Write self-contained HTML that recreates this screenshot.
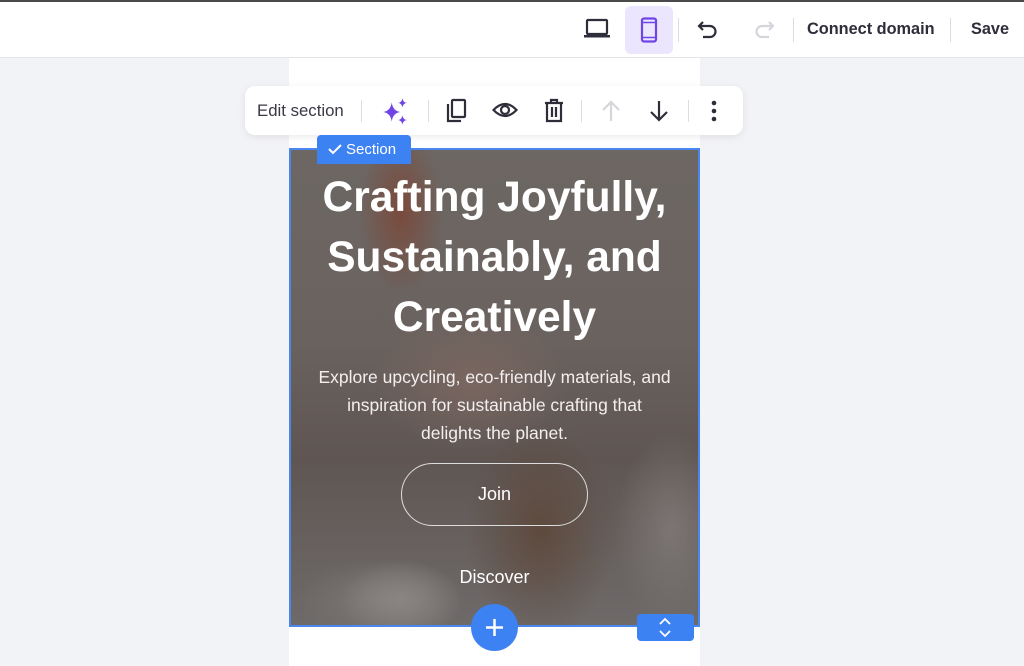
<!DOCTYPE html>
<html><head><meta charset="utf-8"><style>
*{margin:0;padding:0;box-sizing:border-box}
body{width:1024px;height:666px;overflow:hidden;background:#f2f3f6;font-family:"Liberation Sans",sans-serif;position:relative}
.top{position:absolute;left:0;top:0;width:1024px;height:58px;background:#fff;border-top:2px solid #4a4a4a;border-bottom:1px solid #e3e4e8}
.col{position:absolute;left:289px;top:58px;width:411px;height:608px;background:#fff}
.sec{position:absolute;left:289px;top:148px;width:411px;height:479px;border:2px solid #4a86f0;overflow:hidden;
background:
radial-gradient(ellipse 60px 40px at 110px 450px,#8a8583,transparent),
radial-gradient(ellipse 120px 60px at 90px 450px,#7d7876,transparent 70%),
radial-gradient(ellipse 80px 140px at 380px 380px,#7b7573,transparent 70%),
radial-gradient(ellipse 100px 150px at 250px 380px,#5e4a3e,transparent 75%),
radial-gradient(ellipse 140px 100px at 180px 230px,#7a6660,transparent 70%),
radial-gradient(ellipse 60px 120px at 110px 60px,#7a4a3c,transparent 70%),
linear-gradient(180deg,#6d6764 0%,#6a625e 40%,#5f5653 65%,#6e6a69 100%)}
h1{position:absolute;top:18px;left:0;width:407px;text-align:center;color:#fff;font-size:42.5px;line-height:60px;font-weight:bold}
p{position:absolute;top:213px;left:25px;width:357px;text-align:center;color:#f2efee;font-size:17.5px;line-height:28px}
.join{position:absolute;left:110px;top:313px;width:187px;height:63px;border:1.5px solid #ddd;border-radius:32px;color:#fff;font-size:18px;text-align:center;line-height:60px}
.disc{position:absolute;left:0;width:407px;top:417px;text-align:center;color:#fff;font-size:18px}
.tb{position:absolute;left:245px;top:86px;width:498px;height:49px;background:#fff;border-radius:10px;box-shadow:0 2px 8px rgba(0,0,0,.08)}
.sep{position:absolute;width:1px;height:22px;background:#dcdde2;top:14px}
.lbl{position:absolute;left:317px;top:135px;width:94px;height:29px;background:#3d82f3;border-radius:4px 4px 0 0;color:#fff;font-size:15px;line-height:29px;padding-left:29px}
svg{position:absolute}
</style></head><body>
<div class="top">
 <div style="position:absolute;left:625px;top:4px;width:48px;height:48px;background:#ebe6fd;border-radius:6px"></div>
 <svg style="left:583px;top:16px" width="28" height="22" viewBox="0 0 28 22"><rect x="4" y="2" width="20" height="14" rx="1" fill="none" stroke="#2e2d3a" stroke-width="2.2"/><rect x="1" y="17" width="26" height="2.5" fill="#2e2d3a"/></svg>
 <svg style="left:640px;top:15px" width="18" height="26" viewBox="0 0 18 26"><rect x="2" y="1.5" width="14" height="23" rx="2" fill="none" stroke="#7045e6" stroke-width="2.2"/><line x1="2" y1="5.5" x2="16" y2="5.5" stroke="#7045e6" stroke-width="1.5"/><line x1="2" y1="20.5" x2="16" y2="20.5" stroke="#7045e6" stroke-width="1.5"/></svg>
 <div style="position:absolute;left:678px;top:16px;width:1px;height:24px;background:#dcdde2"></div>
 <svg style="left:697px;top:18px" width="22" height="20" viewBox="0 0 22 20"><path d="M6 2 L2 6 L6 10 M2 6 H13 a5.5 5.5 0 0 1 0 11 H6" fill="none" stroke="#2e2d3a" stroke-width="2.2"/></svg>
 <svg style="left:753px;top:18px" width="22" height="20" viewBox="0 0 22 20"><path d="M16 2 L20 6 L16 10 M20 6 H9 a5.5 5.5 0 0 0 0 11 H16" fill="none" stroke="#d5d6db" stroke-width="2.2"/></svg>
 <div style="position:absolute;left:793px;top:16px;width:1px;height:24px;background:#dcdde2"></div>
 <div style="position:absolute;left:807px;top:18px;font-size:16.3px;font-weight:bold;color:#2e2d3a">Connect domain</div>
 <div style="position:absolute;left:950px;top:16px;width:1px;height:24px;background:#dcdde2"></div>
 <div style="position:absolute;left:971px;top:18px;font-size:16.3px;font-weight:bold;color:#2e2d3a">Save</div>
</div>
<div class="col"></div>
<div class="sec">
 <h1>Crafting Joyfully, Sustainably, and Creatively</h1>
 <p>Explore upcycling, eco-friendly materials, and inspiration for sustainable crafting that delights the planet.</p>
 <div class="join">Join</div>
 <div class="disc">Discover</div>
</div>
<div class="tb">
 <div style="position:absolute;left:12px;top:15px;font-size:16.8px;color:#3a3946">Edit section</div>
 <div class="sep" style="left:116px"></div>
 <svg style="left:136px;top:11px" width="30" height="30" viewBox="0 0 28 28" fill="#7045e6"><path d="M10 5 Q11 13 18 14 Q11 15 10 23 Q9 15 2 14 Q9 13 10 5Z"/><path d="M20 1 Q20.5 5 24 5.5 Q20.5 6 20 10 Q19.5 6 16 5.5 Q19.5 5 20 1Z"/><path d="M20 17 Q20.5 21 24 21.5 Q20.5 22 20 26 Q19.5 22 16 21.5 Q19.5 21 20 17Z"/></svg>
 <div class="sep" style="left:183px"></div>
 <svg style="left:200px;top:12px" width="24" height="26" viewBox="0 0 24 26"><rect x="7" y="2" width="13" height="17" rx="1" fill="none" stroke="#2e2d3a" stroke-width="2.2"/><path d="M3 6 V23 H16" fill="none" stroke="#2e2d3a" stroke-width="2.2"/></svg>
 <svg style="left:247px;top:14px" width="26" height="20" viewBox="0 0 26 20"><path d="M1.5 10 Q13 -2 24.5 10 Q13 22 1.5 10Z" fill="none" stroke="#2e2d3a" stroke-width="2.2"/><circle cx="13" cy="10" r="4" fill="none" stroke="#2e2d3a" stroke-width="2.2"/></svg>
 <svg style="left:298px;top:12px" width="22" height="26" viewBox="0 0 22 26"><path d="M2 5 H20 M8 5 V2 H14 V5 M4 5 V23 H18 V5 M9 9 V19 M13 9 V19" fill="none" stroke="#2e2d3a" stroke-width="2.2"/></svg>
 <div class="sep" style="left:336px"></div>
 <svg style="left:355px;top:13px" width="22" height="24" viewBox="0 0 22 24"><path d="M11 22 V3 M3 11 L11 3 L19 11" fill="none" stroke="#d5d6db" stroke-width="2.2"/></svg>
 <svg style="left:403px;top:13px" width="22" height="24" viewBox="0 0 22 24"><path d="M11 2 V21 M3 13 L11 21 L19 13" fill="none" stroke="#2e2d3a" stroke-width="2.2"/></svg>
 <div class="sep" style="left:443px"></div>
 <svg style="left:466px;top:13px" width="6" height="24" viewBox="0 0 6 24" fill="#2e2d3a"><circle cx="3" cy="4" r="2.3"/><circle cx="3" cy="12" r="2.3"/><circle cx="3" cy="20" r="2.3"/></svg>
</div>
<div class="lbl">Section</div>
<svg style="left:327px;top:142px" width="16" height="14" viewBox="0 0 16 14"><path d="M2 7 L6 11 L14 3" fill="none" stroke="#fff" stroke-width="2"/></svg>
<div style="position:absolute;left:471px;top:604px;width:47px;height:47px;border-radius:50%;background:#3d82f3"></div>
<svg style="left:483px;top:616px" width="23" height="23" viewBox="0 0 23 23"><path d="M11.5 3 V20 M3 11.5 H20" stroke="#fff" stroke-width="2.5"/></svg>
<div style="position:absolute;left:637px;top:614px;width:57px;height:27px;border-radius:4px;background:#3d82f3"></div>
<svg style="left:657px;top:617px" width="16" height="22" viewBox="0 0 16 22"><path d="M3 7 L8 2 L13 7 M3 14 L8 19 L13 14" fill="none" stroke="#fff" stroke-width="1.8"/></svg>
</body></html>
